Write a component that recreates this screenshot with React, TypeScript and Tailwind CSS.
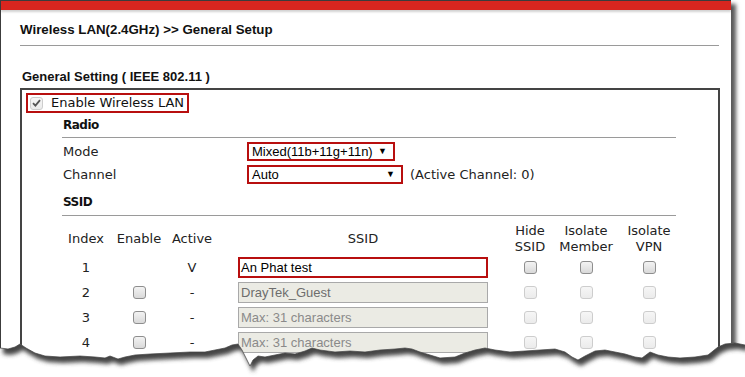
const verdana = "font-['DejaVu_Sans',sans-serif]";
const arial = "font-['Liberation_Sans',Arial,sans-serif]";

function Box({ checked, disabled }: { checked?: boolean; disabled?: boolean }) {
  const tone = disabled
    ? "border-[#cdcdcd] bg-gradient-to-b from-[#f6f6f6] to-[#ebebeb]"
    : "border-[#8e8e8e] bg-gradient-to-b from-[#f3f3f3] to-[#d9d9d9]";
  return (
    <span className={`inline-flex items-center justify-center w-[13px] h-[13px] rounded-[3px] border ${tone}`}>
      {checked && (
        <svg width="9" height="8" viewBox="0 0 9 8">
          <path d="M1 4.2 L3.4 6.6 L8 1.2" fill="none" stroke="#555" strokeWidth="1.8" />
        </svg>
      )}
    </span>
  );
}

const edge: [number, number][] = [
  [0, 348], [8, 349], [15, 347], [20, 344], [26, 348], [35, 353], [45, 356], [60, 357], [80, 356],
  [95, 357], [105, 358], [110, 356], [118, 359], [125, 357], [135, 355], [150, 354], [170, 353],
  [190, 352], [205, 352], [215, 350], [225, 348], [232, 345], [238, 344], [242, 350], [246, 358],
  [250, 366], [253, 360], [258, 356], [265, 357], [275, 355], [285, 353], [295, 354], [305, 351],
  [312, 348], [320, 350], [335, 352], [350, 351], [365, 352], [380, 350], [395, 349], [405, 348],
  [412, 349], [420, 352], [430, 355], [440, 358], [455, 357], [465, 353], [475, 350], [485, 348],
  [495, 350], [510, 352], [525, 351], [540, 350], [555, 349], [565, 352], [572, 357], [578, 360],
  [585, 356], [595, 351], [605, 350], [615, 352], [625, 354], [635, 357], [642, 358], [650, 352],
  [658, 355], [668, 357], [680, 358], [695, 357], [708, 355], [718, 347], [725, 344], [735, 343],
  [745, 345],
];

function TornEdge() {
  const top = 330;
  const line = edge.map(([x, y]) => `${x},${y - top}`).join(" L");
  const below = `M${line} L745,47 L0,47 Z`;
  const above = `M${line} L745,-10 L0,-10 Z`;
  return (
    <svg className="absolute left-0 top-[330px]" width="745" height="47" viewBox="0 0 745 47">
      <defs>
        <clipPath id="below">
          <path d={below} />
        </clipPath>
        <filter id="soft" x="-5%" y="-50%" width="110%" height="200%">
          <feGaussianBlur stdDeviation="2" />
        </filter>
      </defs>
      <g clipPath="url(#below)">
        <rect x="0" y="0" width="745" height="47" fill="#fff" />
        <path d={above} transform="translate(3 6)" fill="#444" filter="url(#soft)" />
      </g>
      <path d={`M${line}`} fill="none" stroke="#444" strokeWidth="0.7" />
    </svg>
  );
}

const cols = "grid grid-cols-[48px_58px_48px_286px_56px_56px_70px] items-center";

function SsidRow({ n, name, active, placeholder }: { n: number; name: string; active?: boolean; placeholder?: boolean }) {
  return (
    <div className={`${cols} h-[25px] text-[13px] text-[#222] ${verdana}`}>
      <span className="text-center">{n}</span>
      <span className="flex justify-center">{!active && <Box />}</span>
      <span className="text-center">{active ? "V" : "-"}</span>
      <span className="pl-[22px]">
        {active ? (
          <span className={`flex items-center w-[250px] h-[21px] border-2 border-[#b80f0f] bg-white pl-px text-[13px] text-black ${arial}`}>
            {name}
          </span>
        ) : (
          <span
            className={`flex items-center w-[250px] h-[21px] border border-[#a9a9a9] bg-[#ebebe4] pl-[2px] text-[13px] ${arial} ${placeholder ? "text-[#8a8a8a]" : "text-[#6d6d6d]"}`}
          >
            {name}
          </span>
        )}
      </span>
      <span className="flex justify-center"><Box disabled={!active} /></span>
      <span className="flex justify-center"><Box disabled={!active} /></span>
      <span className="flex justify-center"><Box disabled={!active} /></span>
    </div>
  );
}

export default function App() {
  return (
    <div className="relative w-[745px] h-[377px] overflow-hidden bg-white">
      <div className="w-[731px] h-[377px] bg-white border-l border-t border-[#3c3c3c] shadow-[5px_4px_4px_rgba(0,0,0,0.65)]">
        <div className="h-[9px] bg-[#d9261f] shadow-[0_2px_2px_rgba(0,0,0,0.18)]" />
        <div className="pl-[19px]">
          <div className={`mt-[12px] leading-[16px] text-[13.3px] font-bold text-[#111] ${arial}`}>
            Wireless LAN(2.4GHz) &gt;&gt; General Setup
          </div>
          <div className="mt-[7px] w-[699px] h-px bg-[#9a9a9a]" />
          <div className={`mt-[23px] leading-[15px] text-[13px] font-bold text-[#111] pl-[2px] ${arial}`}>
            General Setting ( IEEE 802.11 )
          </div>
          <div className="mt-[4px] w-[700px] h-[300px] border-2 border-[#444]">
            <div className="mt-[3px] ml-[4px] flex items-center w-[163px] h-[20px] border-2 border-[#b80f0f] pl-[2px]">
              <Box checked disabled />
              <span className={`ml-[8px] text-[13px] text-[#111] ${verdana}`}>Enable Wireless LAN</span>
            </div>
            <div className="pl-[40px]">
              <div className={`mt-[4px] leading-[16px] text-[12px] font-bold tracking-[-0.5px] text-[#111] pl-px ${verdana}`}>Radio</div>
              <div className="mt-[4px] w-[614px] h-px bg-[#9a9a9a]" />
              <div className={`mt-[4px] flex items-center h-[19px] text-[13px] text-[#222] ${verdana}`}>
                <span className="w-[185px] pl-px">Mode</span>
                <span className={`flex items-center justify-between w-[148px] h-[19px] border-2 border-[#b80f0f] pl-[3px] pr-[6px] text-[13px] text-black ${arial}`}>
                  Mixed(11b+11g+11n)
                  <span className="text-[9px]">▼</span>
                </span>
              </div>
              <div className={`mt-[4px] flex items-center h-[19px] text-[13px] text-[#222] ${verdana}`}>
                <span className="w-[185px] pl-px">Channel</span>
                <span className={`flex items-center justify-between w-[156px] h-[19px] border-2 border-[#b80f0f] pl-[3px] pr-[6px] text-[13px] text-black ${arial}`}>
                  Auto
                  <span className="text-[9px]">▼</span>
                </span>
                <span className="ml-[7px]">(Active Channel: 0)</span>
              </div>
              <div className={`mt-[10px] leading-[16px] text-[12px] font-bold tracking-[-0.5px] text-[#111] pl-px ${verdana}`}>SSID</div>
              <div className="mt-[5px] w-[614px] h-px bg-[#9a9a9a]" />
              <div className={`${cols} mt-[7px] h-[32px] text-[13px] leading-[16px] text-[#222] ${verdana}`}>
                <span className="text-center">Index</span>
                <span className="text-center">Enable</span>
                <span className="text-center">Active</span>
                <span className="pl-[22px]"><span className="block w-[250px] text-center">SSID</span></span>
                <span className="text-center">Hide<br />SSID</span>
                <span className="text-center">Isolate<br />Member</span>
                <span className="text-center">Isolate<br />VPN</span>
              </div>
              <SsidRow n={1} name="An Phat test" active />
              <SsidRow n={2} name="DrayTek_Guest" />
              <SsidRow n={3} name="Max: 31 characters" placeholder />
              <SsidRow n={4} name="Max: 31 characters" placeholder />
            </div>
          </div>
        </div>
      </div>
      <TornEdge />
    </div>
  );
}
